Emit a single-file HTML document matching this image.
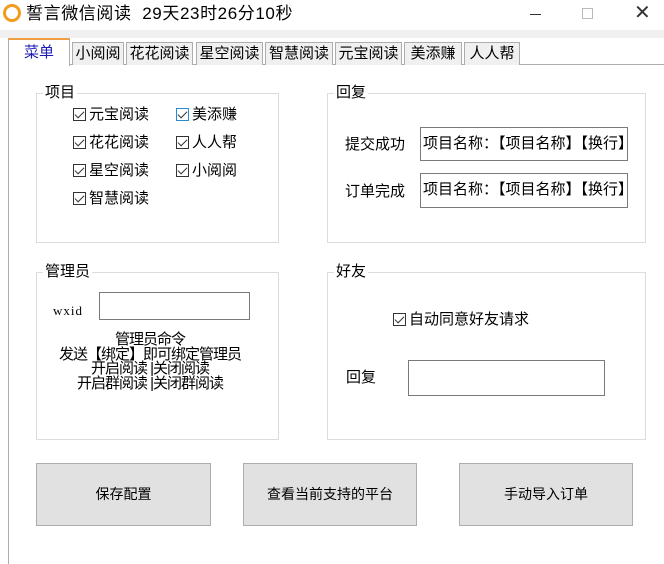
<!DOCTYPE html><html><head><meta charset="utf-8"><style>
*{margin:0;padding:0;box-sizing:border-box}
body{width:664px;height:562px;background:#fff;position:relative;overflow:hidden;font-family:"Liberation Sans","Microsoft YaHei","Noto Sans CJK SC",sans-serif;font-size:14px;color:#000}
.a{position:absolute;white-space:nowrap}
.tab{position:absolute;top:42px;height:23px;background:#f0f0f0;border:1px solid #adadad;border-bottom:none;text-align:center;line-height:21px;font-size:15px}
.grp{position:absolute;border:1px solid #dcdcdc}
.gl{position:absolute;top:-10px;left:6px;background:#fff;padding:0 2px;line-height:18px;font-size:15px}
.cb{position:absolute;white-space:nowrap;line-height:18px;font-size:15px}
.cb i{display:inline-block;width:13px;height:13px;border:1px solid #333;vertical-align:-2px;margin-right:3px;position:relative;background:#fff}
.cb i:after{content:"";position:absolute;left:3px;top:0px;width:4px;height:8px;border:solid #333;border-width:0 1.5px 1.5px 0;transform:rotate(45deg)}
.tb{position:absolute;border:1px solid #7a7a7a;background:#fff;line-height:32px;padding-left:2px;overflow:hidden;white-space:nowrap;font-size:15px}
.btn{position:absolute;top:463px;height:63px;background:#e1e1e1;border:1px solid #adadad;text-align:center;line-height:61px}
</style></head><body>
<div class="a" style="left:0;top:0;width:664px;height:30px;background:#fff"></div>
<div class="a" style="left:3px;top:4px;width:18px;height:18px;border-radius:50%;border:3px solid #f29b1c"></div>
<div class="a" style="left:26px;top:3px;font-size:17px;line-height:22px;letter-spacing:0.6px">誓言微信阅读&nbsp; 29天23时26分10秒</div>
<div class="a" style="left:530px;top:14px;width:11px;height:1px;background:#333"></div>
<div class="a" style="left:582px;top:8px;width:11px;height:11px;border:1px solid #bbb"></div>
<div class="a" style="left:634px;top:2px;font-size:20px;line-height:22px;color:#333">✕</div>
<div class="a" style="left:0;top:30px;width:664px;height:8px;background:#f0f0f0"></div>
<div class="a" style="left:8px;top:64px;width:660px;height:500px;border-left:1px solid #adadad;border-top:1px solid #adadad"></div>
<div class="tab" style="left:72px;width:52px">小阅阅</div>
<div class="tab" style="left:126px;width:67px">花花阅读</div>
<div class="tab" style="left:196px;width:67px">星空阅读</div>
<div class="tab" style="left:265px;width:68px">智慧阅读</div>
<div class="tab" style="left:335px;width:67px">元宝阅读</div>
<div class="tab" style="left:404px;width:58px">美添赚</div>
<div class="tab" style="left:464px;width:56px">人人帮</div>
<div class="tab" style="left:8px;top:38px;width:62px;height:28px;background:#fff;border-top:2px solid #f0a040;color:#1a1ab0;line-height:26px">菜单</div>

<div class="grp" style="left:36px;top:93px;width:243px;height:150px"><div class="gl">项目</div></div>
<div class="cb" style="left:73px;top:106px"><i></i>元宝阅读</div>
<div class="cb" style="left:73px;top:134px"><i></i>花花阅读</div>
<div class="cb" style="left:73px;top:162px"><i></i>星空阅读</div>
<div class="cb" style="left:73px;top:190px"><i></i>智慧阅读</div>
<div class="cb" style="left:176px;top:106px"><i style="border-color:#2a8ad0"></i>美添赚</div>
<div class="cb" style="left:176px;top:134px"><i></i>人人帮</div>
<div class="cb" style="left:176px;top:162px"><i></i>小阅阅</div>

<div class="grp" style="left:327px;top:93px;width:319px;height:150px"><div class="gl">回复</div></div>
<div class="a" style="left:345px;top:136px;line-height:18px;font-size:15px">提交成功</div>
<div class="tb" style="left:420px;top:127px;width:208px;height:34px">项目名称：【项目名称】【换行】</div>
<div class="a" style="left:345px;top:183px;line-height:18px;font-size:15px">订单完成</div>
<div class="tb" style="left:420px;top:173px;width:208px;height:35px">项目名称：【项目名称】【换行】</div>

<div class="grp" style="left:36px;top:272px;width:243px;height:168px"><div class="gl">管理员</div></div>
<div class="a" style="left:53px;top:303px;font-family:'Liberation Serif',serif;font-size:13px;letter-spacing:1px">wxid</div>
<div class="tb" style="left:99px;top:292px;width:151px;height:28px"></div>
<div class="a" style="left:40px;top:333px;width:220px;text-align:center;line-height:14.5px;font-size:15px;letter-spacing:-1px">管理员命令<br>发送【绑定】即可绑定管理员<br>开启阅读 |关闭阅读<br>开启群阅读 |关闭群阅读</div>

<div class="grp" style="left:327px;top:272px;width:319px;height:168px"><div class="gl">好友</div></div>
<div class="cb" style="left:393px;top:311px"><i></i>自动同意好友请求</div>
<div class="a" style="left:346px;top:369px;line-height:18px;font-size:15px">回复</div>
<div class="tb" style="left:408px;top:360px;width:197px;height:36px"></div>

<div class="btn" style="left:36px;width:175px">保存配置</div>
<div class="btn" style="left:243px;width:174px">查看当前支持的平台</div>
<div class="btn" style="left:459px;width:174px">手动导入订单</div>
</body></html>
